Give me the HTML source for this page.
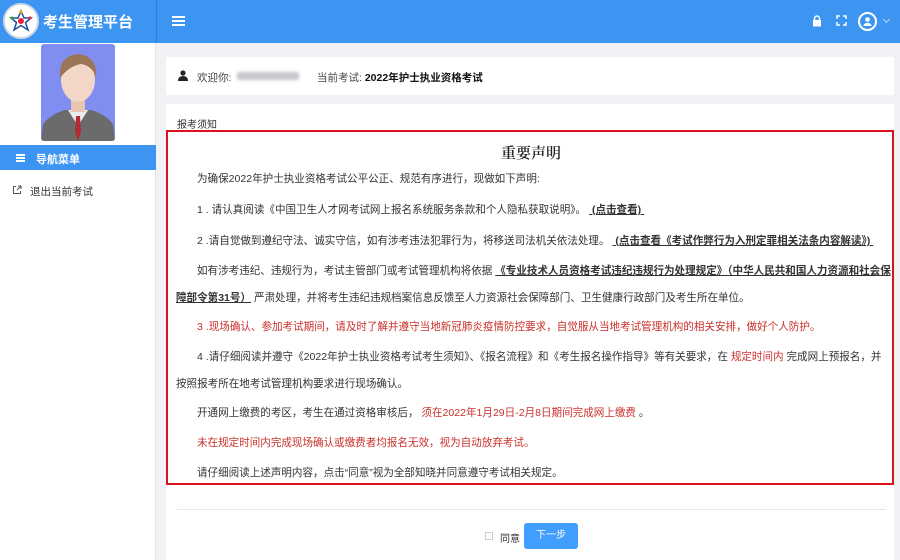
<!DOCTYPE html>
<html><head><meta charset="utf-8">
<style>
*{margin:0;padding:0;box-sizing:border-box}
body{width:900px;height:560px;overflow:hidden;background:#f0f2f5;font-family:"Liberation Sans","Noto Sans CJK SC",sans-serif;font-size:11px;color:#333;position:relative}
.abs{position:absolute}
.top{left:0;top:0;width:900px;height:43px;background:#3d95f2}
.side{left:0;top:43px;width:156px;height:517px;background:#fff;border-right:1px solid #e4e4e4}
.ln{position:absolute;left:197px;white-space:nowrap;font-size:10.55px;color:#333;line-height:14px}
.red{color:#c9302c}
.u{text-decoration:underline;font-weight:bold;color:#333}
</style></head><body>
<div class="abs top"></div>
<div class="abs" style="left:156px;top:0;width:1px;height:43px;background:#2f7fd6"></div>
<div class="abs" style="left:3px;top:3px;width:36px;height:36px;border-radius:50%;background:#fff;border:2px solid #cfd8e6"></div>
<svg class="abs" style="left:8px;top:8px" width="26" height="26" viewBox="0 0 26 26"><path d="M13 3 L16 10 L23 10 L17.5 14.5 L20 22 L13 17.5 L6 22 L8.5 14.5 L3 10 L10 10Z" fill="none" stroke="#1f4fa0" stroke-width="1.5"/><circle cx="13" cy="13" r="3" fill="#e23"/><circle cx="13" cy="4" r="1.5" fill="#f90"/><circle cx="4" cy="10" r="1.5" fill="#2a2"/><circle cx="22" cy="10" r="1.5" fill="#e23"/></svg>
<div class="abs" style="left:43px;top:11px;color:#fff;font-size:15px;font-weight:bold">考生管理平台</div>
<div class="abs" style="left:172px;top:16px;width:13px;height:2px;background:#fff;box-shadow:0 4px 0 #fff,0 8px 0 #fff"></div>
<svg class="abs" style="left:812px;top:15px" width="10" height="12" viewBox="0 0 10 12"><path d="M2.5 5V3.5a2.5 2.5 0 0 1 5 0V5" fill="none" stroke="#fff" stroke-width="1.5"/><rect x="1" y="5" width="8" height="6.5" fill="#fff"/></svg>
<svg class="abs" style="left:836px;top:15px" width="11" height="11" viewBox="0 0 11 11" fill="none" stroke="#fff" stroke-width="1.5"><path d="M1 4V1h3M7 1h3v3M10 7v3H7M4 10H1V7"/></svg>
<div class="abs" style="left:858px;top:12px;width:19px;height:19px;border-radius:50%;border:2px solid #fff;background:#3d95f2"></div>
<svg class="abs" style="left:862px;top:16px" width="11" height="11" viewBox="0 0 11 11"><circle cx="5.5" cy="3.5" r="2.3" fill="#fff"/><path d="M1.5 10a4 3.2 0 0 1 8 0z" fill="#fff"/></svg>
<div class="abs" style="left:884px;top:17px;width:5px;height:5px;border-right:1px solid #bcd8fa;border-bottom:1px solid #bcd8fa;transform:rotate(45deg)"></div>
<div class="abs side"></div>
<div class="abs" style="left:41px;top:44px;width:74px;height:97px;background:#7f8ef0;border-radius:3px;overflow:hidden">
<svg width="74" height="97" viewBox="0 0 74 97"><path d="M0 97 L2 80 Q10 70 24 66 L50 66 Q64 70 72 80 L74 97Z" fill="#6b6b6b"/><path d="M27 66 L37 82 L47 66Z" fill="#e9eef3"/><path d="M35 72 L39 72 L40 88 L37 97 L34 88Z" fill="#b32c34"/><rect x="30" y="52" width="14" height="16" fill="#e9c4b0"/><ellipse cx="37" cy="36" rx="17" ry="22" fill="#f2d6c6"/><path d="M19 34 Q17 12 37 10 Q57 12 55 34 Q52 22 40 20 Q28 22 19 34Z" fill="#9a7558"/></svg></div>
<div class="abs" style="left:0;top:145px;width:156px;height:25px;background:#3d95f2"></div>
<div class="abs" style="left:16px;top:154px;width:9px;height:1.5px;background:#fff;box-shadow:0 3px 0 #fff,0 6px 0 #fff"></div>
<div class="abs" style="left:36px;top:151px;color:#fff;font-weight:bold;font-size:11px">导航菜单</div>
<svg class="abs" style="left:12px;top:185px" width="10" height="10" viewBox="0 0 10 10" fill="none" stroke="#555" stroke-width="1"><path d="M4 1.5H1.5v7h7V6M6 1h3v3M9 1L5 5"/></svg>
<div class="abs" style="left:30px;top:184px;font-size:10.5px;color:#333">退出当前考试</div>
<div class="abs" style="left:166px;top:57px;width:728px;height:38px;background:#fff;border-radius:2px"></div>
<svg class="abs" style="left:178px;top:70px" width="10" height="11" viewBox="0 0 10 11"><circle cx="5" cy="3" r="2.6" fill="#222"/><path d="M0 11 Q0 6 5 6 Q10 6 10 11Z" fill="#222"/></svg>
<div class="abs" style="left:197px;top:70px;font-size:10.5px;color:#444">欢迎你:</div>
<div class="abs" style="left:237px;top:72px;width:62px;height:8px;background:#c8c8cc;filter:blur(1.5px)"></div>
<div class="abs" style="left:317px;top:70px;font-size:10.5px;color:#444">当前考试: <b style="color:#111">2022年护士执业资格考试</b></div>
<div class="abs" style="left:166px;top:104px;width:728px;height:456px;background:#fff"></div>
<div class="abs" style="left:177px;top:116px;font-size:10px;color:#333">报考须知</div>
<div class="abs" style="left:166px;top:130px;width:728px;height:355px;border:2px solid #d9131b"></div>
<div class="abs" style="left:501px;top:142px;font-size:15px;font-weight:600;color:#222;font-family:'Noto Serif CJK SC','Liberation Serif',serif">重要声明</div>
<div class="ln" style="top:172px">为确保2022年护士执业资格考试公平公正、规范有序进行，现做如下声明:</div>
<div class="ln" style="top:203px">1 . 请认真阅读《中国卫生人才网考试网上报名系统服务条款和个人隐私获取说明》。 <span class="u">&nbsp;(点击查看)&nbsp;</span></div>
<div class="ln" style="top:234px">2 .请自觉做到遵纪守法、诚实守信，如有涉考违法犯罪行为，将移送司法机关依法处理。 <span class="u">&nbsp;(点击查看《考试作弊行为入刑定罪相关法条内容解读》)&nbsp;</span></div>
<div class="ln" style="top:264px">如有涉考违纪、违规行为，考试主管部门或考试管理机构将依据 <span class="u">《专业技术人员资格考试违纪违规行为处理规定》（中华人民共和国人力资源和社会保</span></div>
<div class="ln" style="top:291px;left:176px"><span class="u">障部令第31号）</span> 严肃处理，并将考生违纪违规档案信息反馈至人力资源社会保障部门、卫生健康行政部门及考生所在单位。</div>
<div class="ln red" style="top:320px">3 .现场确认、参加考试期间，请及时了解并遵守当地新冠肺炎疫情防控要求，自觉服从当地考试管理机构的相关安排，做好个人防护。</div>
<div class="ln" style="top:350px">4 .请仔细阅读并遵守《2022年护士执业资格考试考生须知》、《报名流程》和《考生报名操作指导》等有关要求，在 <span class="red">规定时间内</span> 完成网上预报名，并</div>
<div class="ln" style="top:377px;left:176px">按照报考所在地考试管理机构要求进行现场确认。</div>
<div class="ln" style="top:406px">开通网上缴费的考区，考生在通过资格审核后， <span class="red">须在2022年1月29日-2月8日期间完成网上缴费</span> 。</div>
<div class="ln red" style="top:436px">未在规定时间内完成现场确认或缴费者均报名无效，视为自动放弃考试。</div>
<div class="ln" style="top:466px">请仔细阅读上述声明内容，点击“同意”视为全部知晓并同意遵守考试相关规定。</div>
<div class="abs" style="left:177px;top:509px;width:709px;height:1px;background:#e6e6e6"></div>
<div class="abs" style="left:485px;top:532px;width:8px;height:8px;border:1px solid #ccc"></div>
<div class="abs" style="left:500px;top:530px;font-size:10px;color:#333">同意</div>
<div class="abs" style="left:524px;top:523px;width:54px;height:26px;background:#409eff;border-radius:3px;color:#fff;font-size:10px;text-align:center;line-height:26px">下一步</div>
</body></html>
